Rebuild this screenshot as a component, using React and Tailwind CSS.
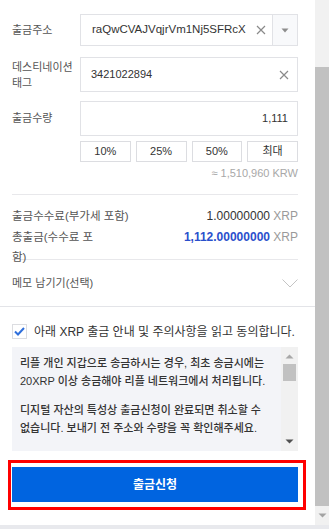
import React from "react";

const XIcon = ({ className = "" }) => (
  <svg width="10" height="10" viewBox="0 0 10 10" className={className}>
    <path d="M1 1 L9 9 M9 1 L1 9" stroke="#8a8a8a" strokeWidth="1.2" fill="none" />
  </svg>
);

export default function App() {
  return (
    <div
      className="w-[329px] h-[529px] bg-white flex flex-col overflow-hidden text-[#333]"
      style={{ fontFamily: '"Liberation Sans", "Noto Sans CJK KR", sans-serif' }}
    >
      <div className="flex h-[525px]">
        {/* main content */}
        <div className="w-[315px] relative">
          <div className="pl-3 pr-[17px] pt-[14px]">
            {/* address */}
            <div className="flex items-center h-[32px]">
              <div className="w-[68px] text-[11px] text-[#555]">출금주소</div>
              <div className="flex-1 h-full border border-[#e1e2e6] flex items-stretch">
                <div className="flex-1 flex items-center pl-[11px] pr-[6px] overflow-hidden">
                  <span className="text-[11.5px] text-[#333] whitespace-nowrap overflow-hidden flex-1">
                    raQwCVAJVqjrVm1Nj5SFRcX
                  </span>
                  <XIcon className="ml-[8px] shrink-0" />
                </div>
                <div className="w-[25px] border-l border-[#e1e2e6] bg-[#f8f9fb] flex items-center justify-center">
                  <svg width="8" height="5" viewBox="0 0 8 5">
                    <path d="M0.5 0.5 L7.5 0.5 L4 4.5 Z" fill="#8d8d8d" />
                  </svg>
                </div>
              </div>
            </div>

            {/* destination tag */}
            <div className="flex items-center h-[35px] mt-[11px]">
              <div className="w-[68px] text-[11px] leading-[16px] text-[#555]">
                데스티네이션
                <br />
                태그
              </div>
              <div className="flex-1 h-full border border-[#e1e2e6] flex items-center pl-[10px] pr-[8px]">
                <span className="flex-1 text-[11px]">3421022894</span>
                <XIcon />
              </div>
            </div>

            {/* amount */}
            <div className="flex items-center h-[35px] mt-[9px]">
              <div className="w-[68px] text-[11px] text-[#555]">출금수량</div>
              <div className="flex-1 h-full border border-[#e1e2e6] flex items-center justify-end pr-[9px]">
                <span className="text-[11px]">1,111</span>
              </div>
            </div>

            {/* percent buttons */}
            <div className="ml-[68px] mt-[5px] grid grid-cols-4 gap-[5px] h-[21px]">
              {["10%", "25%", "50%", "최대"].map((t) => (
                <div
                  key={t}
                  className="border border-[#dcdde1] flex items-center justify-center text-[11px] text-[#333] bg-white"
                >
                  {t}
                </div>
              ))}
            </div>

            <div className="mt-[3px] h-[16px] leading-[16px] text-right text-[11px] text-[#a8a8a8]">
              ≈ 1,510,960 KRW
            </div>

            {/* fee section */}
            <div className="mt-[13px] border-t border-[#e8e8eb] h-[65px] pt-[11px]">
              <div className="flex justify-between leading-[20px] h-[21px]">
                <span className="text-[11.5px] text-[#555]">출금수수료(부가세 포함)</span>
                <span className="text-[12px]">
                  <span className="text-[#333]">1.00000000</span>
                  <span className="text-[#9a9a9a]"> XRP</span>
                </span>
              </div>
              <div className="flex justify-between leading-[20px] h-[20px]">
                <span className="text-[11.5px] text-[#555]">
                  총출금(수수료 포
                  <br />
                  함)
                </span>
                <span className="text-[12px]">
                  <span className="text-[#2b4fcc] font-bold">1,112.00000000</span>
                  <span className="text-[#9a9a9a]"> XRP</span>
                </span>
              </div>
            </div>

            {/* memo */}
            <div className="border-t border-[#e8e8eb] h-[47px] flex items-center justify-between">
              <span className="text-[11px] text-[#555]">메모 남기기(선택)</span>
              <svg width="16" height="9" viewBox="0 0 16 9">
                <path d="M0.5 0.5 L8 8 L15.5 0.5" stroke="#c4c4c4" strokeWidth="1" fill="none" />
              </svg>
            </div>
          </div>

          <div className="border-t border-[#e3e4e8]" />

          <div className="pl-3 pr-[17px]">
            {/* agreement */}
            <div className="flex items-center mt-[17px] h-[15px]">
              <div className="w-[15px] h-[15px] shrink-0 border border-[#dcdde1] bg-white flex items-center justify-center">
                <svg width="11" height="9" viewBox="0 0 11 9">
                  <path d="M1 4.5 L4 7.5 L10 1" stroke="#2f6fdb" strokeWidth="2" fill="none" />
                </svg>
              </div>
              <span className="ml-[7px] text-[12px] text-[#333] whitespace-nowrap">
                아래 XRP 출금 안내 및 주의사항을 읽고 동의합니다.
              </span>
            </div>

            {/* notice */}
            <div className="mt-[8px] h-[104px] bg-[#f3f4f8] flex overflow-hidden">
              <div className="flex-1 pl-[8px] pt-[7px] text-[11px] leading-[18px] text-[#333] font-medium overflow-hidden">
                <p className="whitespace-nowrap">
                  리플 개인 지갑으로 송금하시는 경우, 최초 송금시에는
                  <br />
                  20XRP 이상 송금해야 리플 네트워크에서 처리됩니다.
                </p>
                <p className="mt-[11px] whitespace-nowrap">
                  디지털 자산의 특성상 출금신청이 완료되면 취소할 수
                  <br />
                  없습니다. 보내기 전 주소와 수량을 꼭 확인해주세요.
                </p>
                <p className="mt-[11px] whitespace-nowrap">
                  출금 신청 후 블록체인 네트워크 상황에 따라 지연될 수
                </p>
              </div>
              <div className="w-[17px] bg-[#f1f1f1] flex flex-col items-center">
                <svg width="9" height="5" viewBox="0 0 9 5" className="mt-[7px]">
                  <path d="M0.5 4.5 L8.5 4.5 L4.5 0.5 Z" fill="#a8a8a8" />
                </svg>
                <div className="mt-[5px] w-[13px] h-[17px] bg-[#c1c1c1]" />
                <div className="flex-1" />
                <svg width="9" height="5" viewBox="0 0 9 5" className="mb-[7px]">
                  <path d="M0.5 0.5 L8.5 0.5 L4.5 4.5 Z" fill="#505050" />
                </svg>
              </div>
            </div>

            {/* submit button */}
            <div className="mt-[16px] h-[35px] bg-[#0064e0] flex items-center justify-center">
              <span className="text-white text-[12px] font-bold">출금신청</span>
            </div>
          </div>

          {/* red highlight overlay */}
          <div className="absolute left-[8px] top-[460px] w-[298px] h-[50px] border-[3px] border-[#ff0000] pointer-events-none" />
        </div>

        {/* page scrollbar */}
        <div className="w-[14px] bg-[#f1f1f1] flex flex-col items-center">
          <div className="h-[67px]" />
          <div className="w-full h-[439px] bg-[#c1c1c1]" />
          <div className="flex-1 flex items-center justify-center">
            <svg width="9" height="5" viewBox="0 0 9 5">
              <path d="M0.5 0.5 L8.5 0.5 L4.5 4.5 Z" fill="#a3a3a3" />
            </svg>
          </div>
        </div>
      </div>
      <div className="h-[4px] bg-[#e8e9ed]" />
    </div>
  );
}
